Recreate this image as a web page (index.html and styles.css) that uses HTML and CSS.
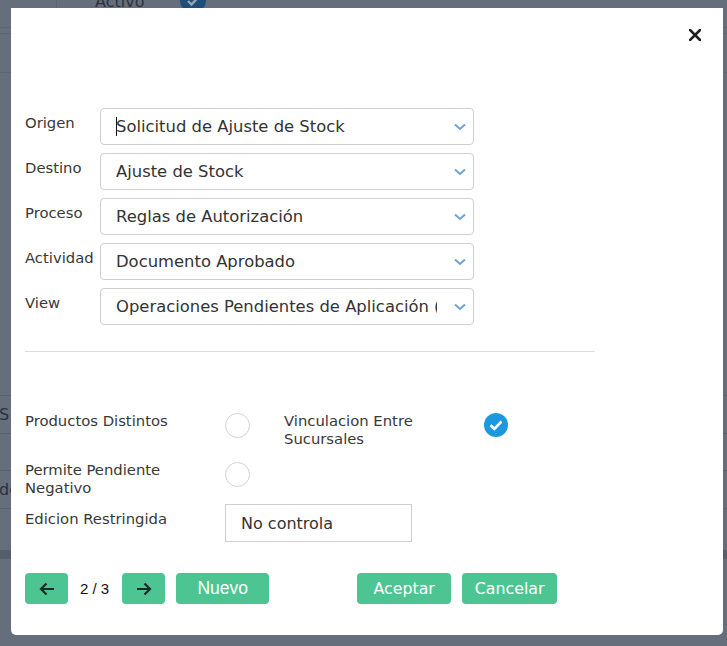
FILE: index.html
```html
<!DOCTYPE html>
<html lang="es">
<head>
<meta charset="utf-8">
<title>Regla</title>
<link rel="stylesheet" href="styles.css">
</head>
<body>
<div class="bg">
  <div class="bg-top">
    <div class="bg-cell"></div>
    <span class="bg-activo">Activo</span>
    <span class="bg-dot"><svg width="26" height="26" viewBox="0 0 26 26"><path d="M8 14 L11.5 17.5 L18.5 10" fill="none" stroke="#9aa3b0" stroke-width="2.4"/></svg></span>
  </div>
  <div class="bg-line l1"></div>
  <div class="bg-line l2"></div>
  <div class="bg-table">
    <div class="bg-row"><span class="bg-txt">S</span></div>
    <div class="bg-row"></div>
    <div class="bg-row"><span class="bg-txt">de</span></div>
    <div class="bg-row"></div>
  </div>
  <div class="bg-band"></div>
</div>

<div class="modal">
  <div class="modal-head">
    <button class="close" aria-label="Cerrar">
      <svg width="12" height="12" viewBox="0 0 12 12"><path d="M1 1 L11 11 M11 1 L1 11" stroke="#1f1f1f" stroke-width="2.6" stroke-linecap="square"/></svg>
    </button>
  </div>

  <div class="form">
    <div class="lbl">Origen</div>
    <div class="select"><span class="val"><span class="caret"></span>Solicitud de Ajuste de Stock</span><span class="chev"><svg width="12" height="8" viewBox="0 0 12 8"><path d="M1 1.5 L6 6 L11 1.5" fill="none" stroke="#6ea3d8" stroke-width="2"/></svg></span></div>

    <div class="lbl">Destino</div>
    <div class="select"><span class="val">Ajuste de Stock</span><span class="chev"><svg width="12" height="8" viewBox="0 0 12 8"><path d="M1 1.5 L6 6 L11 1.5" fill="none" stroke="#6ea3d8" stroke-width="2"/></svg></span></div>

    <div class="lbl">Proceso</div>
    <div class="select"><span class="val">Reglas de Autorización</span><span class="chev"><svg width="12" height="8" viewBox="0 0 12 8"><path d="M1 1.5 L6 6 L11 1.5" fill="none" stroke="#6ea3d8" stroke-width="2"/></svg></span></div>

    <div class="lbl">Actividad</div>
    <div class="select"><span class="val">Documento Aprobado</span><span class="chev"><svg width="12" height="8" viewBox="0 0 12 8"><path d="M1 1.5 L6 6 L11 1.5" fill="none" stroke="#6ea3d8" stroke-width="2"/></svg></span></div>

    <div class="lbl">View</div>
    <div class="select"><span class="val">Operaciones Pendientes de Aplicación (Todas)</span><span class="chev"><svg width="12" height="8" viewBox="0 0 12 8"><path d="M1 1.5 L6 6 L11 1.5" fill="none" stroke="#6ea3d8" stroke-width="2"/></svg></span></div>
  </div>

  <div class="divider"></div>

  <div class="checks">
    <div class="crow r1">
      <div class="clbl">Productos Distintos</div>
      <span class="radio"></span>
      <div class="clbl second">Vinculacion Entre<br>Sucursales</div>
      <span class="checked">
        <svg width="24" height="24" viewBox="0 0 24 24"><circle cx="12" cy="12" r="12" fill="#1c99de"/><path d="M6.5 12.3 L10.3 16 L17.5 8.5" fill="none" stroke="#fff" stroke-width="2.6"/></svg>
      </span>
    </div>
    <div class="crow r2">
      <div class="clbl">Permite Pendiente<br>Negativo</div>
      <span class="radio"></span>
    </div>
    <div class="crow r3">
      <div class="clbl pad">Edicion Restringida</div>
      <div class="input">No controla</div>
    </div>
  </div>

  <div class="footer">
    <button class="btn icon" aria-label="Anterior">
      <svg width="16" height="14" viewBox="0 0 16 14"><path d="M15 7 H2 M7.5 1.5 L2 7 L7.5 12.5" fill="none" stroke="#1e2a25" stroke-width="2.2"/></svg>
    </button>
    <span class="pager">2 / 3</span>
    <button class="btn icon" aria-label="Siguiente">
      <svg width="16" height="14" viewBox="0 0 16 14"><path d="M1 7 H14 M8.5 1.5 L14 7 L8.5 12.5" fill="none" stroke="#1e2a25" stroke-width="2.2"/></svg>
    </button>
    <button class="btn nuevo">Nuevo</button>
    <button class="btn text aceptar">Aceptar</button>
    <button class="btn text">Cancelar</button>
  </div>
</div>
</body>
</html>
```

FILE: styles.css
```css
* { box-sizing: border-box; }

html, body {
  margin: 0;
  padding: 0;
}

body {
  width: 727px;
  height: 646px;
  overflow: hidden;
  background: #666d7b;
  position: relative;
  font-family: "DejaVu Sans", Verdana, sans-serif;
}

/* dimmed page behind the dialog */
.bg {
  width: 727px;
  height: 646px;
}

.bg-top {
  display: flex;
  align-items: flex-start;
  height: 38px;
  margin-top: -10px;
  border-bottom: 1px solid #5d6472;
}

.bg-cell {
  width: 57px;
  height: 100%;
  border-right: 1px solid #5d6472;
}

.bg-activo {
  margin-left: 38px;
  margin-top: 3px;
  font-size: 16px;
  line-height: 18px;
  color: #2c323d;
}

.bg-dot {
  flex: none;
  display: flex;
  width: 26px;
  height: 26px;
  border-radius: 50%;
  background: #1d4f78;
  margin-left: 36px;
  margin-top: -3px;
}

.bg-line {
  height: 1px;
  background: #5d6472;
}

.bg-line.l1 { margin-top: 5px; }
.bg-line.l2 { margin-top: 38px; }

.bg-table {
  margin-top: 322px;
}

.bg-row {
  height: 37.5px;
  border-top: 1px solid #5a616e;
  display: flex;
  align-items: center;
}

.bg-txt {
  font-size: 16px;
  color: #2c323d;
  margin-left: -1px;
}

.bg-band {
  margin-top: 5px;
  height: 9px;
  background: #575e6b;
}

/* dialog */
.modal {
  position: absolute;
  left: 11px;
  top: 8px;
  width: 712px;
  height: 627px;
  background: #fff;
  border-radius: 0 0 5px 5px;
  padding: 0 14px;
  color: #333;
}

.modal-head {
  height: 100px;
  display: flex;
  justify-content: flex-end;
  padding-top: 21px;
  padding-right: 8px;
}

.close {
  width: 12px;
  height: 12px;
  padding: 0;
  border: 0;
  background: none;
  display: flex;
  cursor: pointer;
}

.form {
  display: grid;
  grid-template-columns: 75px 374px;
  row-gap: 8px;
}

.lbl {
  font-size: 14.8px;
  line-height: 18px;
  padding-top: 6px;
  color: #383838;
}

.select {
  height: 37px;
  border: 1px solid #cfcfcf;
  border-radius: 4px;
  display: flex;
  align-items: center;
  padding-left: 15px;
}

.val {
  flex: 1;
  min-width: 0;
  white-space: nowrap;
  overflow: hidden;
  font-size: 16.4px;
  line-height: 20px;
  padding-top: 1px;
  color: #333;
}

.caret {
  display: inline-block;
  width: 0;
  height: 19px;
  border-left: 1px solid #111;
  margin-right: -1px;
  vertical-align: -4px;
}

.chev {
  width: 36px;
  display: flex;
  justify-content: flex-end;
  padding-right: 7px;
  padding-top: 1px;
}

.divider {
  margin-top: 26px;
  width: 570px;
  height: 1px;
  background: #dcdcdc;
}

.checks {
  margin-top: 60px;
}

.crow {
  display: flex;
  align-items: flex-start;
}

.crow.r1 { height: 49px; }
.crow.r2 { height: 43px; }
.crow.r3 { height: 37px; }

.clbl {
  width: 200px;
  font-size: 14.8px;
  line-height: 17.5px;
  color: #383838;
}

.clbl.second {
  margin-left: 34px;
}

.clbl.pad {
  padding-top: 6px;
}

.radio {
  width: 25px;
  height: 25px;
  border: 1px solid #d3d3d3;
  border-radius: 50%;
  margin-top: 1px;
}

.checked {
  display: flex;
  margin-top: 1px;
}

.input {
  width: 187px;
  height: 38px;
  border: 1px solid #cfcfcf;
  padding-left: 15px;
  display: flex;
  align-items: center;
  font-size: 16px;
  color: #333;
}

.footer {
  margin-top: 32px;
  display: flex;
  align-items: center;
}

.btn {
  height: 31px;
  border: 0;
  border-radius: 4px;
  background: #4dc593;
  color: #fff;
  display: flex;
  align-items: center;
  justify-content: center;
  padding: 0;
  cursor: pointer;
}

.btn.icon {
  width: 43px;
}

.pager {
  font-family: "Liberation Sans", Arial, sans-serif;
  font-size: 15px;
  color: #111;
  margin: 0 13px 0 12px;
}

.btn.nuevo {
  width: 93px;
  margin-left: 11px;
  font-family: "Liberation Sans", Arial, sans-serif;
  font-size: 17.5px;
}

.btn.text {
  width: 95px;
  margin-left: 11px;
  font-family: "DejaVu Sans", Verdana, sans-serif;
  font-size: 15.8px;
}

.btn.aceptar {
  margin-left: 88px;
  width: 94px;
}
```
